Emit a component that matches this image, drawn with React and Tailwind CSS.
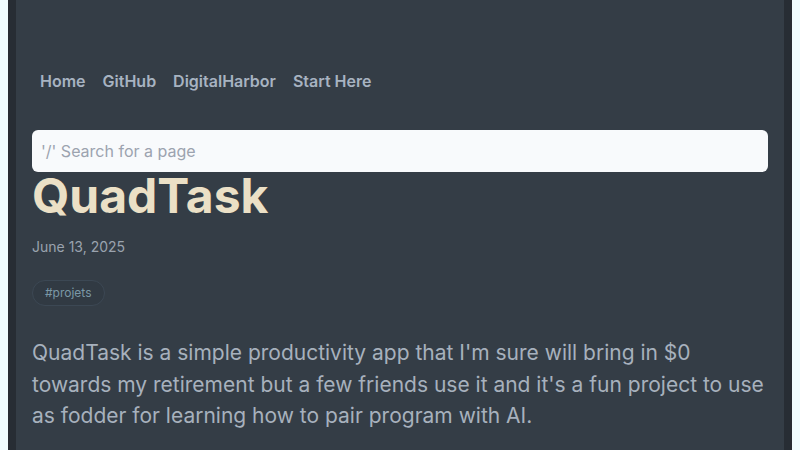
export default function App() {
  const links = ['Home', 'GitHub', 'DigitalHarbor', 'Start Here'];

  return (
    <div className="min-h-[450px] bg-[#f0fdff] px-2 font-['Inter',sans-serif]">
      <div className="min-h-[450px] border-x-8 border-[#272d34] bg-[#343d46] px-4">
        <nav className="flex gap-[17px] pl-2 pt-[69px]">
          {links.map((l) => (
            <a key={l} className="text-base font-semibold leading-6 text-[#a7b3c1]">
              {l}
            </a>
          ))}
        </nav>

        <div className="mt-[37px] flex h-[42px] items-center rounded-md bg-[#f8fafc] px-[9px]">
          <span className="text-base text-[#9ca3af]">'/' Search for a page</span>
        </div>

        <h1 className="text-5xl font-bold leading-[48px] text-[#ebe0c6]">QuadTask</h1>

        <p className="mt-[17px] text-sm leading-5 text-[#9aa3ae]">June 13, 2025</p>

        <div className="mt-[23px] flex">
          <span className="flex h-[26px] items-center rounded-full border border-[#3c4854] bg-[#313a43] px-3 text-xs text-[#7b98a6]">
            #projets
          </span>
        </div>

        <p className="mt-[31px] text-[21px] leading-[31.5px] text-[#a7b1bd]">
          QuadTask is a simple productivity app that I'm sure will bring in $0 towards my retirement but a few friends use it and it's a fun project to use as fodder for learning how to pair program with AI.
        </p>
      </div>
    </div>
  );
}
